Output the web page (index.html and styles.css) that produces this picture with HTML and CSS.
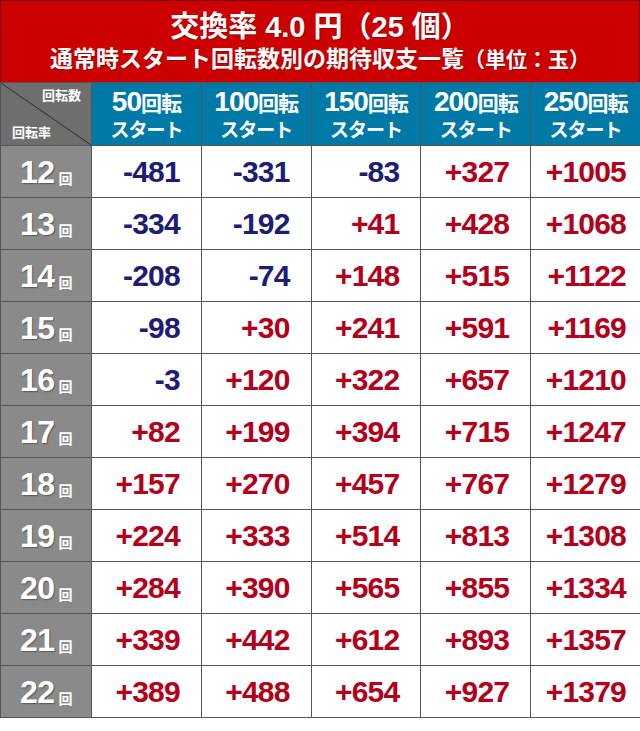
FILE: index.html
```html
<!DOCTYPE html>
<html lang="ja">
<head>
<meta charset="utf-8">
<link rel="stylesheet" href="styles.css">
</head>
<body>
<div class="page">
  <div class="title">
    <div class="t1">交換率 4.0 円（25 個）</div>
    <div class="t2">通常時スタート回転数別の期待収支一覧<span class="unit">（単位：玉）</span></div>
  </div>
  <div class="grid">
    <div class="corner"><span class="ctop">回転数</span><span class="cbot">回転率</span></div>
    <div class="head"><div class="hl"><span class="hn">50</span>回転</div><div class="hs">スタート</div></div>
    <div class="head"><div class="hl"><span class="hn">100</span>回転</div><div class="hs">スタート</div></div>
    <div class="head"><div class="hl"><span class="hn">150</span>回転</div><div class="hs">スタート</div></div>
    <div class="head"><div class="hl"><span class="hn">200</span>回転</div><div class="hs">スタート</div></div>
    <div class="head"><div class="hl"><span class="hn">250</span>回転</div><div class="hs">スタート</div></div>

    <div class="lab">12<span class="kai">回</span></div>
    <div class="num neg">-481</div><div class="num neg">-331</div><div class="num neg">-83</div><div class="num pos">+327</div><div class="num pos last">+1005</div>

    <div class="lab">13<span class="kai">回</span></div>
    <div class="num neg">-334</div><div class="num neg">-192</div><div class="num pos">+41</div><div class="num pos">+428</div><div class="num pos last">+1068</div>

    <div class="lab">14<span class="kai">回</span></div>
    <div class="num neg">-208</div><div class="num neg">-74</div><div class="num pos">+148</div><div class="num pos">+515</div><div class="num pos last">+1122</div>

    <div class="lab">15<span class="kai">回</span></div>
    <div class="num neg">-98</div><div class="num pos">+30</div><div class="num pos">+241</div><div class="num pos">+591</div><div class="num pos last">+1169</div>

    <div class="lab">16<span class="kai">回</span></div>
    <div class="num neg">-3</div><div class="num pos">+120</div><div class="num pos">+322</div><div class="num pos">+657</div><div class="num pos last">+1210</div>

    <div class="lab">17<span class="kai">回</span></div>
    <div class="num pos">+82</div><div class="num pos">+199</div><div class="num pos">+394</div><div class="num pos">+715</div><div class="num pos last">+1247</div>

    <div class="lab">18<span class="kai">回</span></div>
    <div class="num pos">+157</div><div class="num pos">+270</div><div class="num pos">+457</div><div class="num pos">+767</div><div class="num pos last">+1279</div>

    <div class="lab">19<span class="kai">回</span></div>
    <div class="num pos">+224</div><div class="num pos">+333</div><div class="num pos">+514</div><div class="num pos">+813</div><div class="num pos last">+1308</div>

    <div class="lab">20<span class="kai">回</span></div>
    <div class="num pos">+284</div><div class="num pos">+390</div><div class="num pos">+565</div><div class="num pos">+855</div><div class="num pos last">+1334</div>

    <div class="lab">21<span class="kai">回</span></div>
    <div class="num pos">+339</div><div class="num pos">+442</div><div class="num pos">+612</div><div class="num pos">+893</div><div class="num pos last">+1357</div>

    <div class="lab">22<span class="kai">回</span></div>
    <div class="num pos">+389</div><div class="num pos">+488</div><div class="num pos">+654</div><div class="num pos">+927</div><div class="num pos last">+1379</div>
  </div>
</div>
</body>
</html>
```

FILE: styles.css
```css
html, body {
  margin: 0;
  padding: 0;
  background: #ffffff;
}
.page {
  width: 640px;
  font-family: "Liberation Sans", "Noto Sans CJK JP", sans-serif;
  font-weight: bold;
}
.title {
  box-sizing: border-box;
  height: 82px;
  background: #cc0000;
  border: 1px solid #6a1010;
  border-bottom: none;
  color: #ffffff;
  text-align: center;
  padding-top: 9px;
  text-shadow: 1px 1px 1px rgba(0, 0, 0, 0.25);
}
.t1 {
  font-size: 29px;
  line-height: 34px;
}
.t2 {
  font-size: 23px;
  line-height: 30px;
}
.unit {
  font-size: 21px;
}
.grid {
  display: grid;
  grid-template-columns: 90px repeat(5, 1fr);
  grid-template-rows: 62px repeat(11, 51px);
  gap: 1px;
  background: #555555;
  border: 1px solid #555555;
  border-right: none;
}
.corner {
  background: linear-gradient(to top right, #6e6e6e calc(50% - 0.8px), #2a2a2a 50%, #6e6e6e calc(50% + 0.8px));
  color: #ffffff;
  font-size: 13px;
  font-family: "Noto Sans CJK JP", sans-serif;
  font-weight: bold;
  display: flex;
  flex-direction: column;
  justify-content: space-between;
  padding: 4px 10px 5px 11px;
}
.ctop {
  align-self: flex-end;
  line-height: 16px;
}
.cbot {
  align-self: flex-start;
  line-height: 16px;
}
.head {
  background: #0079a6;
  color: #ffffff;
  display: flex;
  flex-direction: column;
  align-items: center;
  justify-content: center;
  font-family: "Noto Sans CJK JP", sans-serif;
  font-size: 21px;
  letter-spacing: -1px;
}
.hl {
  line-height: 30px;
}
.hs {
  font-size: 19px;
  line-height: 24px;
}
.hn {
  font-family: "Liberation Sans", sans-serif;
  font-size: 28px;
  letter-spacing: -1px;
}
.lab {
  background: #8a8a8a;
  color: #ffffff;
  font-size: 32px;
  letter-spacing: -0.5px;
  display: flex;
  align-items: center;
  justify-content: center;
  padding-top: 2px;
  text-shadow: 1px 1px 1px rgba(0, 0, 0, 0.35);
}
.kai {
  font-family: "Noto Sans CJK JP", sans-serif;
  font-size: 14px;
  align-self: flex-end;
  margin-bottom: 9px;
  margin-left: 4px;
  text-shadow: none;
}
.num {
  background: #ffffff;
  font-size: 30px;
  display: flex;
  align-items: center;
  justify-content: flex-end;
  padding-right: 21px;
  letter-spacing: -0.8px;
}
.num.last {
  padding-right: 14px;
}
.neg {
  color: #1d1d75;
}
.pos {
  color: #b3001b;
}
```
